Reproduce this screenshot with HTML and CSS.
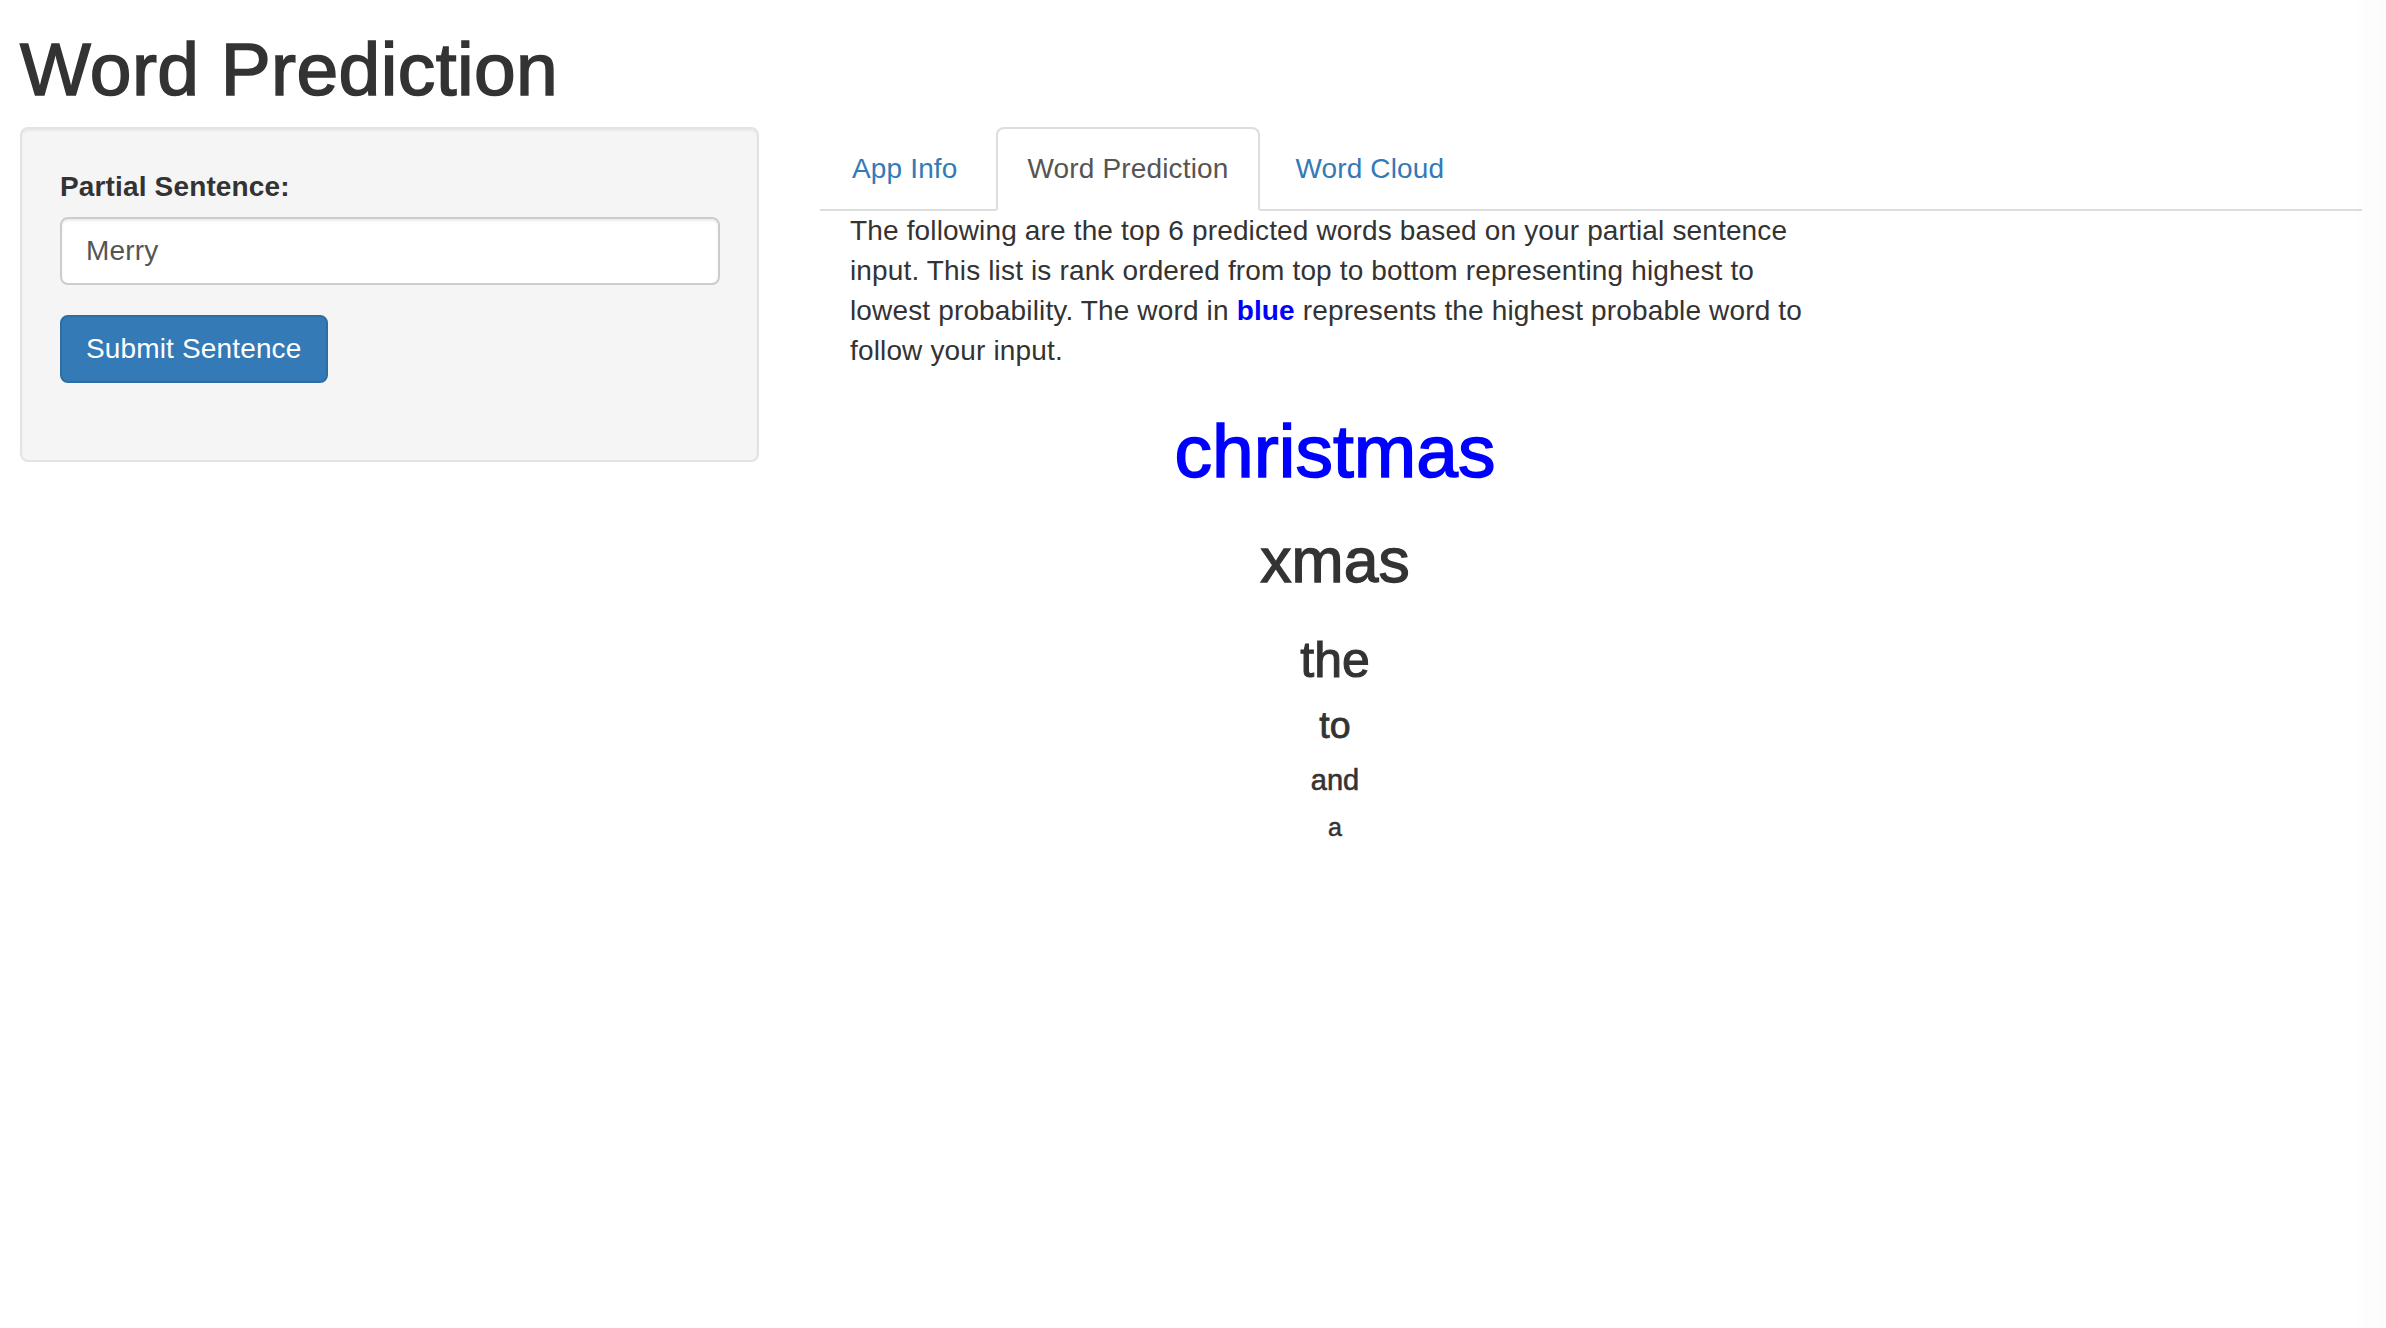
FILE: index.html
```html
<!DOCTYPE html>
<html lang="en">
<head>
<meta charset="utf-8">
<title>Word Prediction</title>
<link rel="stylesheet" href="styles.css">
</head>
<body>
<div class="page">
  <h1 class="title">Word Prediction</h1>
  <div class="row">
    <div class="sidebar">
      <div class="well">
        <div class="form-group">
          <label class="label" for="sentence">Partial Sentence:</label>
          <input class="input" id="sentence" type="text" value="Merry">
        </div>
        <div class="btn-wrap">
          <button class="btn" type="button">Submit Sentence</button>
        </div>
      </div>
    </div>
    <div class="main">
      <ul class="tabs">
        <li class="tab tab-first"><a class="tab-link">App Info</a></li>
        <li class="tab tab-active"><a class="tab-link">Word Prediction</a></li>
        <li class="tab"><a class="tab-link">Word Cloud</a></li>
      </ul>
      <div class="tab-content">
        <p class="intro">The following are the top 6 predicted words based on your partial sentence input. This list is rank ordered from top to bottom representing highest to lowest probability. The word in <strong class="blue-word">blue</strong> represents the highest probable word to follow your input.</p>
        <div class="words">
          <div class="word w1">christmas</div>
          <div class="word w2">xmas</div>
          <div class="word w3">the</div>
          <div class="word w4">to</div>
          <div class="word w5">and</div>
          <div class="word w6">a</div>
        </div>
      </div>
    </div>
  </div>
</div>
<div class="scroll-track"></div>
</body>
</html>
```

FILE: styles.css
```css
html, body {
  margin: 0;
  padding: 0;
  background: #ffffff;
}

body {
  font-family: "Liberation Sans", Arial, sans-serif;
  font-size: 28px;
  line-height: 40px;
  color: #333333;
  letter-spacing: 0.15px;
}

.page {
  padding: 0 24px 0 20px;
}

.title {
  margin: 28px 0 17px 0;
  font-size: 75px;
  line-height: 82px;
  font-weight: 400;
  letter-spacing: 0.4px;
  color: #333333;
  -webkit-text-stroke: 1.6px #333333;
}

.row {
  display: flex;
  align-items: flex-start;
  gap: 61px;
}

.sidebar {
  width: 739px;
  flex: none;
}

.well {
  background: #f5f5f5;
  border: 2px solid #e3e3e3;
  border-radius: 8px;
  box-shadow: inset 0 2px 2px rgba(0, 0, 0, 0.05);
  padding: 38px;
}

.form-group {
  margin-bottom: 30px;
}

.label {
  display: inline-block;
  font-weight: 700;
  margin-bottom: 10px;
  color: #333333;
}

.input {
  display: block;
  box-sizing: border-box;
  width: 660px;
  height: 68px;
  margin: 0;
  padding: 12px 24px;
  font-family: "Liberation Sans", Arial, sans-serif;
  font-size: 28px;
  line-height: 40px;
  letter-spacing: 0.15px;
  color: #555555;
  background: #ffffff;
  border: 2px solid #cccccc;
  border-radius: 8px;
  box-shadow: inset 0 2px 2px rgba(0, 0, 0, 0.075);
  outline: none;
}

.btn-wrap {
  margin-bottom: 39px;
}

.btn {
  display: inline-block;
  box-sizing: border-box;
  height: 68px;
  margin: 0;
  padding: 12px 24px;
  font-family: "Liberation Sans", Arial, sans-serif;
  font-size: 28px;
  line-height: 40px;
  letter-spacing: 0.15px;
  color: #ffffff;
  background: #337ab7;
  border: 2px solid #2e6da4;
  border-radius: 8px;
  cursor: pointer;
}

.main {
  flex: 1;
  min-width: 0;
}

.tabs {
  display: flex;
  margin: 0;
  padding: 0;
  list-style: none;
  border-bottom: 2px solid #dddddd;
}

.tab {
  margin-bottom: -2px;
  margin-right: 3px;
}

.tab-first {
  margin-right: 6px;
}

.tab-link {
  display: block;
  padding: 20px 30px;
  line-height: 40px;
  color: #337ab7;
  border: 2px solid transparent;
  border-radius: 8px 8px 0 0;
  text-decoration: none;
}

.tab-active .tab-link {
  color: #555555;
  background: #ffffff;
  border-color: #dddddd;
  border-bottom-color: transparent;
}

.tab-content {
  width: 970px;
  padding-left: 30px;
}

.intro {
  margin: 0;
}

.blue-word {
  color: #0000ff;
  font-weight: 700;
}

.words {
  display: flex;
  flex-direction: column;
  align-items: center;
  text-align: center;
  letter-spacing: 0;
}

.word {
  color: #333333;
  font-weight: 400;
}

.w1 {
  margin-top: 40px;
  font-size: 75px;
  line-height: 80px;
  color: #0000ff;
  -webkit-text-stroke: 1.6px #0000ff;
}

.w2 {
  margin-top: 35px;
  font-size: 62.5px;
  line-height: 68px;
  -webkit-text-stroke: 1.3px #333333;
}

.w3 {
  margin-top: 39px;
  font-size: 50px;
  line-height: 54px;
  -webkit-text-stroke: 1.1px #333333;
}

.w4 {
  margin-top: 18px;
  font-size: 37.5px;
  line-height: 40px;
  -webkit-text-stroke: 0.8px #333333;
}

.w5 {
  margin-top: 19px;
  font-size: 29px;
  line-height: 32px;
  -webkit-text-stroke: 0.6px #333333;
}

.w6 {
  margin-top: 17px;
  font-size: 25px;
  line-height: 28px;
  -webkit-text-stroke: 0.5px #333333;
}

.scroll-track {
  position: fixed;
  top: 0;
  right: 0;
  width: 30px;
  height: 100%;
  background: linear-gradient(to right, rgba(0, 0, 0, 0.003), rgba(0, 0, 0, 0.012));
  pointer-events: none;
}
```
